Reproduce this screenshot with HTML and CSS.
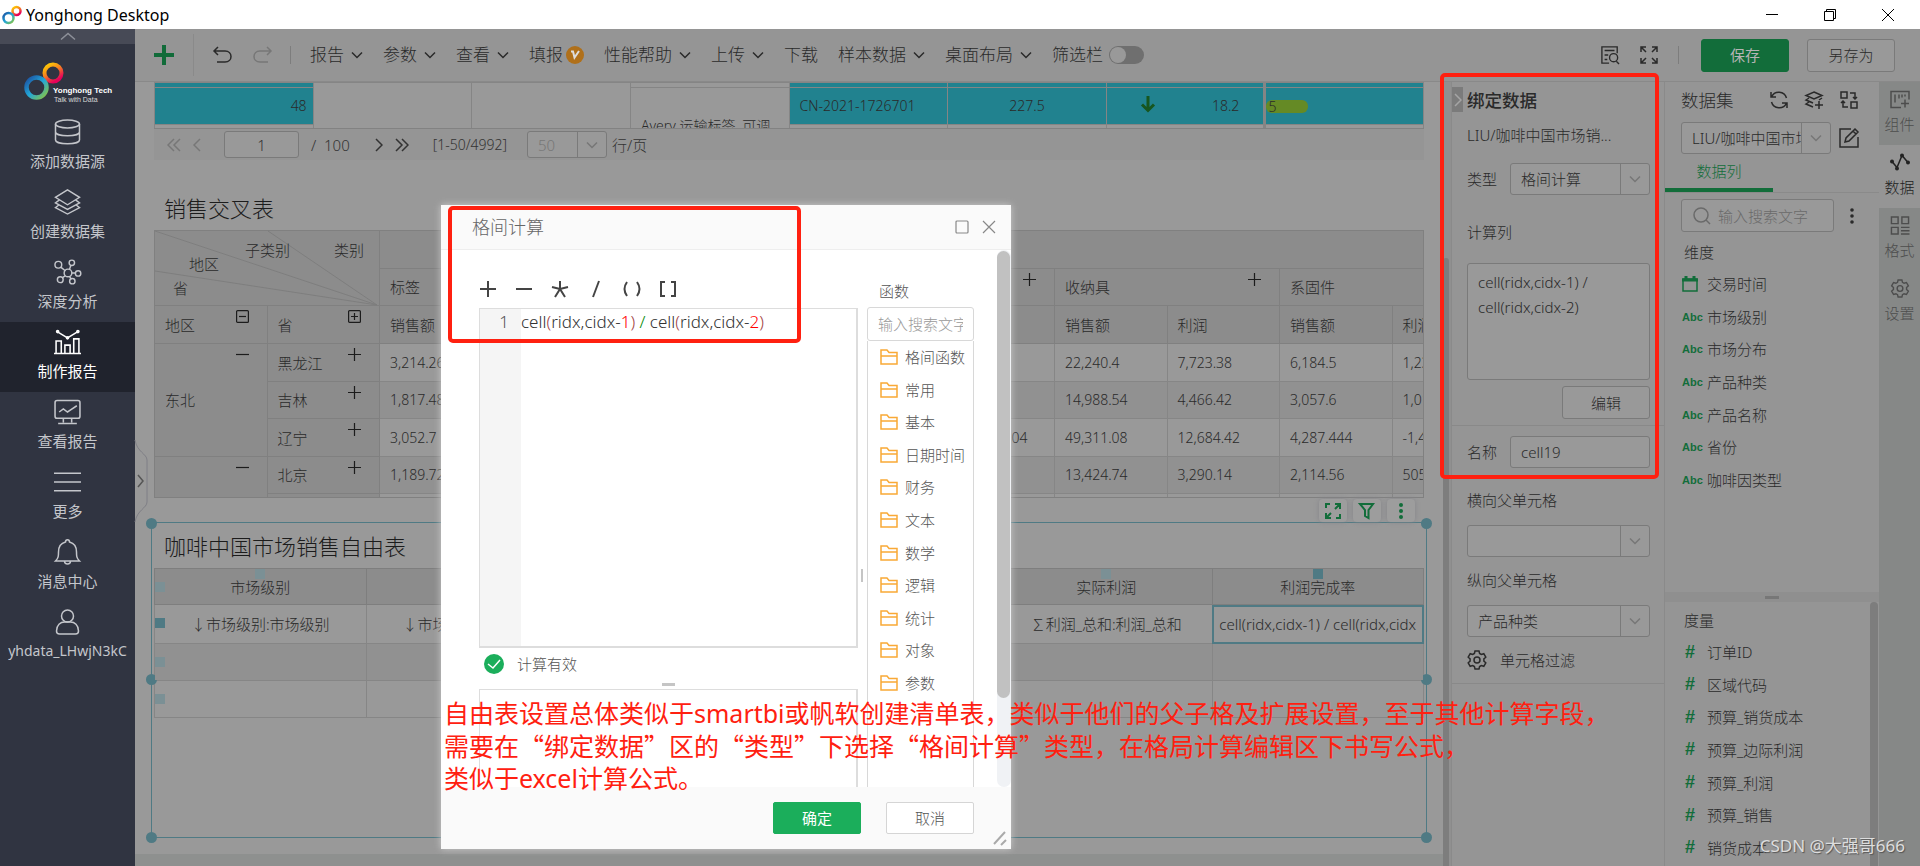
FILE: index.html
```html
<!DOCTYPE html>
<html lang="zh-CN">
<head>
<meta charset="utf-8">
<title>Yonghong Desktop</title>
<link rel="stylesheet" href="styles.css">
</head>
<body>
<svg class="defs" aria-hidden="true">
  <defs>
    <linearGradient id="warm" x1="0" y1="0" x2="0.6" y2="1"><stop offset="0" stop-color="#ffd400"/><stop offset="0.5" stop-color="#f58220"/><stop offset="1" stop-color="#e5005a"/></linearGradient>
    <linearGradient id="cool" x1="0" y1="0" x2="1" y2="1"><stop offset="0" stop-color="#1c4fa0"/><stop offset="0.5" stop-color="#22a7d8"/><stop offset="1" stop-color="#8cc63f"/></linearGradient>
  </defs>
  <symbol id="down" viewBox="0 0 12 12"><path d="M1 3.500l5 5 5-5"/></symbol>
  <symbol id="right" viewBox="0 0 8 14"><path d="M1 1l6 6-6 6"/></symbol>
  <symbol id="left" viewBox="0 0 8 14"><path d="M7 1L1 7l6 6"/></symbol>
  <symbol id="right2" viewBox="0 0 14 14"><path d="M1 1l6 6-6 6M7 1l6 6-6 6"/></symbol>
  <symbol id="left2" viewBox="0 0 14 14"><path d="M7 1L1 7l6 6M13 1L7 7l6 6"/></symbol>
  <symbol id="plus" viewBox="0 0 13 13"><path d="M6.500 0v13M0 6.500h13"/></symbol>
  <symbol id="minus" viewBox="0 0 13 13"><path d="M0 6.500h13"/></symbol>
  <symbol id="boxplus" viewBox="0 0 13 13"><rect x="0.600" y="0.600" width="11.800" height="11.800" rx="1"/><path d="M6.500 3v7M3 6.500h7"/></symbol>
  <symbol id="boxminus" viewBox="0 0 13 13"><rect x="0.600" y="0.600" width="11.800" height="11.800" rx="1"/><path d="M3 6.500h7"/></symbol>
  <symbol id="gear" viewBox="0 0 20 20"><path d="M8 1h4l.6 2.500 1.700 1 2.500-.8 2 3.500-1.900 1.700v2.200l1.900 1.700-2 3.500-2.500-.8-1.700 1L12 19H8l-.6-2.500-1.700-1-2.500.8-2-3.500 1.900-1.700V8.900L1.200 7.200l2-3.500 2.500.8 1.700-1z"/><circle cx="10" cy="10" r="3"/></symbol>
  <symbol id="folder" viewBox="0 0 18 16"><path d="M1 15V1h6l2 2.500h8V15zM1 7h16"/></symbol>
  <symbol id="expand" viewBox="0 0 18 18"><path d="M1 6V1h5M1 1l5 5M12 1h5v5M17 1l-5 5M1 12v5h5M1 17l5-5M17 12v5h-5M17 17l-5-5"/></symbol>
</svg>

<header class="titlebar">
  <svg class="app-icon" viewBox="0 0 20 20"><circle cx="14.500" cy="6" r="4" stroke="url(#warm)"/><circle cx="6.500" cy="13" r="5" stroke="url(#cool)"/></svg>
  <h1>Yonghong Desktop</h1>
  <nav class="window-buttons">
    <button aria-label="最小化"><svg viewBox="0 0 12 12"><path d="M0 5.500h12"/></svg></button>
    <button aria-label="还原"><svg viewBox="0 0 12 12"><path d="M.5 2.500h9v9h-9zM2.500 2.500v-2h9v9h-2"/></svg></button>
    <button aria-label="关闭"><svg viewBox="0 0 12 12"><path d="M0 0l12 12M12 0L0 12"/></svg></button>
  </nav>
</header>

<div class="app">
  <aside class="sidebar">
    <button class="fold" aria-label="收起"><svg viewBox="0 0 14 7"><path d="M0 6.500l7-6 7 6"/></svg></button>
    <div class="brand">
      <svg viewBox="0 0 92 42">
        <circle cx="29" cy="11" r="8.500" fill="none" stroke="url(#warm)" stroke-width="4"/>
        <circle cx="12.500" cy="25.500" r="10" fill="none" stroke="url(#cool)" stroke-width="4.500"/>
        <text class="brand-name" x="29" y="31">Yonghong Tech</text>
        <text class="brand-tag" x="30" y="40">Talk with Data</text>
      </svg>
    </div>
    <nav class="side-nav">
      <a href="#"><svg viewBox="0 0 26 26"><ellipse cx="13" cy="5" rx="12" ry="4"/><path d="M1 5v16c0 5 24 5 24 0V5M1 13c0 5 24 5 24 0"/></svg>添加数据源</a>
      <a href="#"><svg viewBox="0 0 28 28"><path d="M14 1l13 8-13 8L1 9zM5 12l-4 3 13 7 13-7-4-3M5 17l-4 3 13 7 13-7-4-3"/></svg>创建数据集</a>
      <a href="#"><svg viewBox="0 0 28 26"><circle cx="14.500" cy="14" r="4"/><circle cx="4.500" cy="5.500" r="3.500"/><circle cx="18.500" cy="3.500" r="2.800"/><circle cx="25" cy="14.500" r="2.800"/><circle cx="6.500" cy="21" r="3"/><circle cx="19" cy="22.500" r="2.800"/><path d="M7 8l5 4M17.500 6l-1.500 4.500M18.500 14h4M11.500 17L8.500 19M16 17.500l2 3"/></svg>深度分析</a>
      <a href="#" class="active"><svg viewBox="0 0 26 24"><path d="M0 23h26M2 23V11h5v12M10.500 23V15h5v8M19 23V9h5v14M3 2l10 6 10-6"/><circle cx="3.500" cy="2" r="1"/><circle cx="13" cy="8" r="1"/><circle cx="23" cy="2" r="1"/></svg>制作报告</a>
      <a href="#"><svg viewBox="0 0 26 24"><rect x="1" y="1" width="24" height="17" rx="2"/><path d="M5 12l4-3 4 3 3-2 6-4M9 18v4M17 18v4M4 23h18"/></svg>查看报告</a>
      <a href="#"><svg viewBox="0 0 26 20"><path d="M0 1.500h26M0 10h26M0 18.500h26"/></svg>更多</a>
      <a href="#"><svg viewBox="0 0 26 26"><path d="M1 22h24c-3-3-3-5-3-9 0-6-3-9-7-10 0-3-4-3-4 0-4 1-7 4-7 10 0 4 0 6-3 9zM10 22c0 4 6 4 6 0"/></svg>消息中心</a>
      <a href="#" class="user"><svg viewBox="0 0 26 26"><circle cx="13" cy="7" r="6"/><path d="M5 25h16c2 0 3-1 3-3 0-6-4-9-8-9h-6c-4 0-8 3-8 9 0 2 1 3 3 3z"/></svg>yhdata_LHwjN3kC</a>
    </nav>
  </aside>

  <main class="main">
    <div class="toolbar">
      <button class="tool add" aria-label="新建"><svg viewBox="0 0 20 20"><path d="M10 0v20M0 10h20"/></svg></button>
      <button class="tool undo" aria-label="撤销"><svg viewBox="0 0 20 18"><path d="M5 1L1 5l4 4M1 5h11c8 0 8 11 0 11H4"/></svg></button>
      <button class="tool redo" aria-label="重做"><svg viewBox="0 0 20 18"><path d="M15 1l4 4-4 4M19 5H8C0 5 0 16 8 16h8"/></svg></button>
      <nav class="menus">
        <button>报告<svg><use href="#down"/></svg></button>
        <button>参数<svg><use href="#down"/></svg></button>
        <button>查看<svg><use href="#down"/></svg></button>
        <button class="tight">填报<svg class="vip" viewBox="0 0 18 18"><circle cx="9" cy="9" r="9"/><path d="M5 5.500h2l1.500 6L13 5"/></svg></button>
        <button>性能帮助<svg><use href="#down"/></svg></button>
        <button>上传<svg><use href="#down"/></svg></button>
        <button>下载</button>
        <button>样本数据<svg><use href="#down"/></svg></button>
        <button>桌面布局<svg><use href="#down"/></svg></button>
        <label class="switch">筛选栏<input type="checkbox" role="switch"></label>
      </nav>
      <div class="actions">
        <button class="tool" aria-label="预览"><svg viewBox="0 0 20 20"><path d="M18 8V1H1v18h8M4 5h11M4 10h4M4 15h3"/><circle cx="14" cy="13" r="4.500"/><path d="M17 17l3 3"/></svg></button>
        <button class="tool full" aria-label="全屏"><svg><use href="#expand"/></svg></button>
        <button class="btn primary">保存</button>
        <button class="btn">另存为</button>
      </div>
    </div>

    <div class="workspace">
      <section class="canvas">
        <button class="drawer" aria-label="展开"><svg viewBox="0 0 13 84"><path class="edge" d="M0 1c2 12 12 14 12 20v42c0 6-10 8-12 20"/><path d="M3 36l5 6-5 6"/></svg></button>
        <div class="page">
          <div class="widget">
            <div class="clip detail-clip">
              <table class="detail">
                <tr class="thin"><td class="teal"></td><td rowspan="3"></td><td rowspan="3"></td><td></td><td class="teal"></td><td class="teal"></td><td class="teal"></td><td class="teal twin"></td></tr>
                <tr class="full-row"><td class="teal end">48</td><td rowspan="2" class="product">Avery 运输标签, 可调</td><td class="teal order">CN-2021-1726701</td><td class="teal mid">227.5</td><td class="teal"><div class="trend"><svg viewBox="0 0 14 16"><path d="M7 0v14M1 8.500l6 6 6-6"/></svg>18.2</div></td><td class="teal twin"><span class="bar">5</span></td></tr>
                <tr class="thin"><td></td><td></td><td></td><td></td><td class="twin"></td></tr>
              </table>
            </div>
            <div class="pager">
              <button class="off" aria-label="首页"><svg class="w14"><use href="#left2"/></svg></button>
              <button class="off" aria-label="上一页"><svg class="w8"><use href="#left"/></svg></button>
              <input type="text" value="1" aria-label="页码">
              <span class="total">/&nbsp; 100</span>
              <button aria-label="下一页"><svg class="w8"><use href="#right"/></svg></button>
              <button aria-label="末页"><svg class="w14"><use href="#right2"/></svg></button>
              <span class="range">[1-50/4992]</span>
              <span class="combo off"><select aria-label="每页行数"><option>50</option></select><span class="arrow"><svg><use href="#down"/></svg></span></span>
              <span>行/页</span>
            </div>
          </div>

          <div class="widget cross-widget">
            <h2>销售交叉表</h2>
            <div class="clip cross-clip">
              <table class="cross">
                <thead>
                <tr>
                  <th colspan="2" rowspan="2" class="corner"><svg viewBox="0 0 224 74"><path d="M0 0l222 74M113 0l109 74M0 40l222 34"/><text x="90" y="25">子类别</text><text x="179" y="25">类别</text><text x="34" y="39">地区</text><text x="18" y="63">省</text></svg></th>
                  <th colspan="10"></th>
                </tr>
                <tr><th colspan="2">标签</th><th colspan="2"></th><th colspan="2"><svg class="op"><use href="#plus"/></svg></th><th colspan="2">收纳具<svg class="op"><use href="#plus"/></svg></th><th colspan="2">系固件</th></tr>
                <tr><th>地区<svg class="op"><use href="#boxminus"/></svg></th><th>省<svg class="op"><use href="#boxplus"/></svg></th><th>销售额</th><th></th><th></th><th></th><th></th><th></th><th>销售额</th><th>利润</th><th>销售额</th><th>利润</th></tr>
                </thead>
                <tbody>
                <tr><th rowspan="3">东北<svg class="op"><use href="#minus"/></svg></th><th>黑龙江<svg class="op"><use href="#plus"/></svg></th><td>3,214.26</td><td></td><td></td><td></td><td></td><td></td><td>22,240.4</td><td>7,723.38</td><td>6,184.5</td><td>1,231.08</td></tr>
                <tr><th>吉林<svg class="op"><use href="#plus"/></svg></th><td>1,817.48</td><td></td><td></td><td></td><td></td><td></td><td>14,988.54</td><td>4,466.42</td><td>3,057.6</td><td>1,012.06</td></tr>
                <tr><th>辽宁<svg class="op"><use href="#plus"/></svg></th><td>3,052.7</td><td></td><td></td><td></td><td></td><td>-22,685.304</td><td>49,311.08</td><td>12,684.42</td><td>4,287.444</td><td>-1,431.5</td></tr>
                <tr><th rowspan="2"><svg class="op"><use href="#minus"/></svg></th><th>北京<svg class="op"><use href="#plus"/></svg></th><td>1,189.72</td><td></td><td></td><td></td><td></td><td></td><td>13,424.74</td><td>3,290.14</td><td>2,114.56</td><td>505.12</td></tr>
                <tr><th></th><td></td><td></td><td></td><td></td><td></td><td></td><td></td><td></td><td></td><td></td></tr>
                </tbody>
              </table>
            </div>
          </div>

          <div class="widget selected">
            <i class="knob tl"></i><i class="knob tr"></i><i class="knob ml"></i><i class="knob mr"></i><i class="knob bl"></i><i class="knob br"></i>
            <div class="float-tools">
              <button aria-label="放大"><svg viewBox="0 0 16 16"><path d="M1 5V1h4M10 1h5v5M15 1l-5 5M1 10v5h5M1 15l5-5M15 11v4h-4"/></svg></button>
              <button aria-label="过滤"><svg viewBox="0 0 16 16"><path d="M1 1h13L9.500 7v8L6 13V7z"/></svg></button>
              <button aria-label="更多"><svg viewBox="0 0 16 16"><g class="dots"><circle cx="8" cy="2" r="2"/><circle cx="8" cy="8" r="2"/><circle cx="8" cy="14" r="2"/></g></svg></button>
            </div>
            <h2>咖啡中国市场销售自由表</h2>
            <table class="free">
              <tr class="head"><th><i class="tick left"></i><i class="tick top"></i>市场级别</th><th></th><th></th><th></th><th><i class="tick top"></i>实际利润</th><th><i class="tick top on"></i>利润完成率</th></tr>
              <tr class="fields"><td><i class="tick left on"></i>↓市场级别:市场级别</td><td>↓市场分布:市场分布</td><td></td><td></td><td>∑利润_总和:利润_总和</td><td class="current">cell(ridx,cidx-1) / cell(ridx,cidx</td></tr>
              <tr class="alt"><td><i class="tick left"></i></td><td></td><td></td><td></td><td></td><td></td></tr>
              <tr><td><i class="tick left"></i></td><td></td><td></td><td></td><td></td><td></td></tr>
            </table>
          </div>
        </div>
      </section>
      <div class="scroll-strip"><span></span></div>

      <section class="bind">
        <button class="collapse" aria-label="收起面板"><svg class="w8"><use href="#right"/></svg></button>
        <h3>绑定数据</h3>
        <p class="source">LIU/咖啡中国市场销...</p>
        <div class="field type"><label for="type">类型</label><span class="combo"><select id="type"><option>格间计算</option></select><span class="arrow"><svg><use href="#down"/></svg></span></span></div>
        <label class="block" for="calc">计算列</label>
        <textarea id="calc">cell(ridx,cidx-1) /
cell(ridx,cidx-2)</textarea>
        <button class="btn edit">编辑</button>
        <div class="field named"><label for="name">名称</label><input id="name" type="text" value="cell19"></div>
        <label class="block parent" for="hp">横向父单元格</label>
        <span class="combo"><select id="hp"><option></option></select><span class="arrow"><svg><use href="#down"/></svg></span></span>
        <label class="block parent" for="vp">纵向父单元格</label>
        <span class="combo"><select id="vp"><option>产品种类</option></select><span class="arrow"><svg><use href="#down"/></svg></span></span>
        <button class="filter"><svg><use href="#gear"/></svg>单元格过滤</button>
      </section>

      <section class="data">
        <div class="data-top">
          <div class="data-head"><h3>数据集</h3>
            <button aria-label="刷新"><svg viewBox="0 0 18 18"><path d="M1 1v5h5M1.500 6a8 8 0 0 1 15 1M17 17v-5h-5M16.500 12a8 8 0 0 1-15-1"/></svg></button>
            <button aria-label="添加数据集"><svg viewBox="0 0 18 18"><path d="M9 1l8 3.500L9 8 1 4.500zM4 7L1 9l7 3M4 11l-3 2 7 3M17 7l-3 2M14 10v8M10 14h8"/></svg></button>
            <button aria-label="替换"><svg viewBox="0 0 18 18"><path d="M1 1h6v6H1zM11 11h6v6h-6zM10 2h5v6M13 6l2 2 2-2M8 16H3v-6M1 12l2-2 2 2"/></svg></button>
          </div>
          <div class="data-pick"><span class="combo"><select aria-label="数据集"><option>LIU/咖啡中国市场销售</option></select><span class="arrow"><svg><use href="#down"/></svg></span></span>
            <button aria-label="编辑"><svg viewBox="0 0 20 20"><path d="M12 1H1v18h18V9M6 14l1-4L16 1l3 3-9 9zM14 3l3 3"/></svg></button></div>
          <div class="tabs"><button>数据列</button></div>
          <div class="search-row"><label class="search"><svg viewBox="0 0 18 18"><circle cx="8" cy="8" r="7"/><path d="M13 13l4 4"/></svg><input type="text" placeholder="输入搜索文字" aria-label="搜索"></label>
            <button aria-label="更多"><svg viewBox="0 0 4 16"><g class="dots"><circle cx="2" cy="2" r="1.800"/><circle cx="2" cy="8" r="1.800"/><circle cx="2" cy="14" r="1.800"/></g></svg></button></div>
          <h4>维度</h4>
          <ul class="fieldlist dims">
            <li><svg class="cal" viewBox="0 0 16 16"><path d="M1 3h14v12H1z"/><path class="bold" d="M0 4h16M4 0v4M12 0v4"/></svg>交易时间</li>
            <li><b>Abc</b>市场级别</li><li><b>Abc</b>市场分布</li><li><b>Abc</b>产品种类</li><li><b>Abc</b>产品名称</li><li><b>Abc</b>省份</li><li><b>Abc</b>咖啡因类型</li>
          </ul>
        </div>
        <div class="splitter"><span></span></div>
        <div class="data-bottom">
          <div class="measures">
            <h4>度量</h4>
            <ul class="fieldlist">
              <li><b class="hash">#</b>订单ID</li><li><b class="hash">#</b>区域代码</li><li><b class="hash">#</b>预算_销货成本</li><li><b class="hash">#</b>预算_边际利润</li><li><b class="hash">#</b>预算_利润</li><li><b class="hash">#</b>预算_销售</li><li><b class="hash">#</b>销货成本</li>
            </ul>
          </div>
          <span class="thumb"></span>
        </div>
      </section>

      <nav class="rail">
        <button><svg viewBox="0 0 20 18"><path d="M11 17H1V1h18v8M5 4v8M9 4v4M12 4v3M15 4v2M15 9v8M11 13h8"/></svg>组件</button>
        <button class="active"><svg viewBox="0 0 20 18"><path d="M2 8l5 6 5-12 6 7"/><g class="dots"><circle cx="2" cy="8" r="2"/><circle cx="7" cy="15" r="2"/><circle cx="12" cy="2" r="2"/><circle cx="18" cy="9" r="2"/></g></svg>数据</button>
        <button><svg viewBox="0 0 20 20"><path d="M1 1h7v7H1zM12 1h7v7h-7zM1 12h7v7H1zM11 12h9M11 15.500h9M11 19h9"/></svg>格式</button>
        <button><svg><use href="#gear"/></svg>设置</button>
      </nav>
    </div>
  </main>
</div>

<div class="dialog" role="dialog" aria-labelledby="dlg-title">
  <div class="dlg-head"><h2 id="dlg-title">格间计算</h2>
    <button aria-label="最大化"><svg viewBox="0 0 14 14"><rect x="1" y="1" width="12" height="12" rx="1"/></svg></button>
    <button aria-label="关闭"><svg viewBox="0 0 14 14"><path d="M1 1l12 12M13 1L1 13"/></svg></button></div>
  <div class="dlg-body">
    <div class="formula">
      <div class="ops">
        <button aria-label="加"><svg viewBox="0 0 18 18"><path d="M9 1v16M1 9h16"/></svg></button>
        <button aria-label="减"><svg viewBox="0 0 18 18"><path d="M1 9h16"/></svg></button>
        <button aria-label="乘"><svg viewBox="0 0 18 18"><path d="M9 1v8M1 7l8 2 8-2M9 9l-5 8M9 9l5 8"/></svg></button>
        <button aria-label="除"><svg viewBox="0 0 18 18"><path d="M12 1L6 17"/></svg></button>
        <button aria-label="括号"><svg viewBox="0 0 18 18"><path d="M4 2q-5 7 0 14M14 2q5 7 0 14"/></svg></button>
        <button aria-label="方括号"><svg viewBox="0 0 18 18"><path d="M6 2H2v14h4M12 2h4v14h-4"/></svg></button>
      </div>
      <div class="editor"><div class="gutter">1</div><code>cell<i>(</i>ridx,cidx-<em>1</em><i>)</i> <u>/</u> cell<i>(</i>ridx,cidx-<em>2</em><i>)</i></code></div>
      <p class="status"><svg viewBox="0 0 20 20"><circle cx="10" cy="10" r="10"/><path d="M4 10l5 4 7-8"/></svg>计算有效</p>
      <span class="h-grip"></span>
      <div class="result"></div>
    </div>
    <span class="v-grip"></span>
    <div class="functions">
      <label for="fn">函数</label>
      <input id="fn" type="text" placeholder="输入搜索文字">
      <div class="fn-box"><ul>
        <li><svg><use href="#folder"/></svg>格间函数</li><li><svg><use href="#folder"/></svg>常用</li><li><svg><use href="#folder"/></svg>基本</li><li><svg><use href="#folder"/></svg>日期时间</li><li><svg><use href="#folder"/></svg>财务</li><li><svg><use href="#folder"/></svg>文本</li><li><svg><use href="#folder"/></svg>数学</li><li><svg><use href="#folder"/></svg>逻辑</li><li><svg><use href="#folder"/></svg>统计</li><li><svg><use href="#folder"/></svg>对象</li><li><svg><use href="#folder"/></svg>参数</li>
      </ul></div>
    </div>
    <div class="dlg-scroll"><span></span></div>
  </div>
  <div class="dlg-foot"><button class="ok">确定</button><button>取消</button>
    <svg class="resize" viewBox="0 0 16 16"><path d="M2 14L13 2M9 15l5-5"/></svg></div>
</div>

<div class="mark mark-dialog"></div>
<div class="mark mark-panel"></div>
<p class="note">自由表设置总体类似于smartbi或帆软创建清单表，类似于他们的父子格及扩展设置，至于其他计算字段，<br>需要在<span class="quoted">“绑定数据”</span>区的<span class="quoted">“类型”</span>下选择<span class="quoted">“格间计算”</span>类型，在格局计算编辑区下书写公式，<br>类似于excel计算公式。</p>
<p class="credit">CSDN @大强哥666</p>
</body>
</html>
```

FILE: styles.css
```css
* { box-sizing: border-box; }
body {
  margin: 0;
  height: 100vh;
  overflow: hidden;
  display: flex;
  flex-direction: column;
  font: 15px/20px "Noto Sans", "Noto Sans CJK SC", sans-serif;
  font-weight: 300;
  color: #2a2a2a;
  background: #959595;
}
h1, h2, h3, h4, p, ul { margin: 0; padding: 0; font-weight: inherit; }
ul { list-style: none; }
button, input, select, textarea { font: inherit; color: inherit; }
button { background: none; border: 0; padding: 0; }
input, textarea, select { border: 1px solid #7a7a7a; border-radius: 3px; background: #999; outline: 0; min-width: 0; }
a { color: inherit; text-decoration: none; }
svg { fill: none; stroke: currentColor; stroke-width: 1.500; flex: none; overflow: visible; display: block; }
svg text { fill: #2a2a2a; stroke: none; font-size: 15px; }
.dots { fill: currentColor; stroke: none; }
.defs { position: absolute; width: 0; height: 0; }
.w8 { width: 8px; height: 14px; }
.w14 { width: 14px; height: 14px; }

/* title bar */
.titlebar { height: 29px; background: #fff; color: #000; display: flex; align-items: center; flex: none; }
.titlebar h1 { font-size: 16px; font-weight: 400; flex: 1; margin-left: 4px; }
.app-icon { width: 20px; height: 20px; margin-left: 2px; stroke-width: 2.500; }
.window-buttons { display: flex; gap: 46px; padding-right: 26px; }
.window-buttons svg { width: 12px; height: 12px; stroke-width: 1; }

.app { flex: 1; display: flex; min-height: 0; }

/* sidebar */
.sidebar { width: 135px; background: #303441; color: #c4c6cb; flex: none; }
.fold { width: 100%; height: 15px; background: #474a56; display: flex; justify-content: center; align-items: center; }
.fold svg { width: 14px; height: 7px; color: #8d9099; }
.brand { height: 68px; padding: 18px 0 0 24px; }
.brand svg { width: 92px; height: 42px; }
svg .brand-name { fill: #fff; font: bold 8px "Liberation Sans", sans-serif; }
svg .brand-tag { fill: #d8d8d8; font: 7px "Liberation Sans", sans-serif; }
.side-nav a { height: 70px; display: grid; grid-template-rows: 40px 18px; justify-items: center; align-items: center; font-weight: 400; }
.side-nav .user { font-size: 14px; }
.side-nav svg { width: 27px; height: 26px; }
.side-nav .active { background: #20232d; color: #fff; }

/* toolbar */
.main { flex: 1; min-width: 0; display: flex; flex-direction: column; }
.toolbar { height: 53px; flex: none; display: flex; align-items: center; border-bottom: 1px solid #898989; font-size: 17px; }
.tool svg { width: 20px; height: 18px; }
.add { width: 59px; height: 42px; padding-left: 19px; border-right: 1px solid #8a8a8a; color: #116b39; }
.add svg { width: 20px; height: 20px; stroke-width: 4; }
.undo { margin-left: 19px; }
.redo { margin-left: 19px; padding-right: 18px; border-right: 1px solid #7d7d7d; color: #777; }
.menus { display: flex; gap: 20px; padding-left: 19px; }
.menus button, .switch { display: flex; align-items: center; gap: 7px; white-space: nowrap; }
.menus button svg { width: 12px; height: 12px; }
.menus .tight { gap: 3px; }
.menus .tight .vip { width: 18px; height: 18px; fill: #b0701a; stroke: none; }
.menus .vip path { stroke: #ddd; stroke-width: 2; fill: none; }
.switch { gap: 6px; }
.switch input { appearance: none; margin: 0; width: 35px; height: 18px; border: 0; border-radius: 9px; background: #6f6f6f; padding: 1px; }
.switch input::before { content: ""; display: block; width: 16px; height: 16px; border-radius: 8px; background: #999; }
.actions { margin-left: auto; padding-right: 25px; display: flex; align-items: center; font-size: 15px; }
.actions .full { margin-left: 20px; padding-right: 20px; margin-right: 22px; border-right: 1px solid #7d7d7d; }
.full svg { width: 18px; height: 18px; }
.btn { width: 88px; height: 33px; border: 1px solid #7a7a7a; border-radius: 3px; background: #999; }
.btn.primary { background: #126d3a; border-color: #126d3a; color: #b5b5b5; font-weight: 400; margin-right: 18px; }

/* workspace */
.workspace { flex: 1; display: flex; min-height: 0; }
.canvas { flex: 1; min-width: 0; background: #8e908f; padding-bottom: 12px; position: relative; display: flex; }
.page { flex: 1; min-width: 0; background: #999; padding: 0 16px 16px; display: flex; flex-direction: column; }
.drawer { position: absolute; left: 0; top: 357px; color: #555; }
.drawer svg { width: 13px; height: 84px; }
.edge { stroke: #7f7f86; stroke-width: 1; fill: #999; }
.widget { margin: 0 3px; }
.widget h2 { font-size: 22px; line-height: 32px; color: #1c1c1c; padding-left: 10px; }
.clip { overflow: hidden; }
table { border-collapse: collapse; table-layout: fixed; width: 100%; }
th { font-weight: inherit; }
.detail-clip { height: 47px; border-bottom: 1px solid #828282; }
.detail td { border: 1px solid #858585; padding: 0 10px; white-space: nowrap; overflow: hidden; font-size: 14px; }
.detail tr.thin { height: 5px; line-height: 0; }
.detail tr.full-row { height: 37px; }
.detail .teal { background: #21828f; }
.detail .end { text-align: right; padding-right: 6px; }
.detail .mid { text-align: center; }
.detail .product { vertical-align: bottom; line-height: 6px; overflow: visible; }
.detail .twin { padding: 0; border-left-width: 3px; }
.trend { display: flex; justify-content: space-between; padding: 0 14px 0 24px; }
.trend svg { width: 14px; height: 16px; color: #17561f; stroke-width: 3; }
.bar { display: block; width: 42px; height: 13px; line-height: 13px; border-radius: 6px; background: #658a25; padding-left: 2px; }
.pager { height: 31px; background: #959595; display: flex; align-items: center; color: #333; }
.pager button:nth-of-type(1) { margin-left: 13px; }
.pager button:nth-of-type(2) { margin-left: 12px; }
.pager button:nth-of-type(4) { margin-left: 12px; }
.pager .off { color: #777; }
.pager input { width: 75px; height: 27px; text-align: center; margin-left: 23px; }
.pager .total { margin: 0 25px 0 12px; }
.pager .range { margin: 0 20px 0 24px; font-size: 14px; }
.pager .combo { width: 80px; height: 27px; margin-right: 5px; }

.combo { display: flex; height: 32px; border: 1px solid #7a7a7a; border-radius: 3px; background: #999; overflow: hidden; }
.combo select { appearance: none; border: 0; flex: 1; width: 0; padding: 0 10px; border-radius: 0; background: none; }
.arrow { width: 29px; border-left: 1px solid #7a7a7a; display: flex; align-items: center; justify-content: center; flex: none; color: #777; }
.arrow svg { width: 12px; height: 12px; }

.cross-widget { padding-top: 28px; }
.cross-widget h2 { line-height: 40px; padding-bottom: 2px; }
.cross-clip { height: 268px; border-right: 1px solid #808080; border-bottom: 1px solid #808080; }
.cross { width: 1351px; }
.cross tr:nth-child(odd) { height: 38px; }
.cross tr:nth-child(even) { height: 37px; }
.cross th, .cross td { border: 1px solid #808080; padding: 0 10px; text-align: left; position: relative; white-space: nowrap; }
.cross td { font-size: 14px; border-color: #868686; }
.cross th { background: #8c8c8c; }
.cross tbody tr:nth-child(even) td { background: #919191; }
.cross .corner { padding: 0; }
.corner svg { width: 224px; height: 74px; stroke: #7e7e7e; stroke-width: 1; }
.op { position: absolute; top: 4px; right: 18px; width: 13px; height: 13px; color: #1c1c1c; stroke-width: 1.200; }

.selected { margin: 24px 0 0; flex: 1; border: 1px solid #4f7a84; padding: 7px 2px; position: relative; }
.selected h2 { padding-bottom: 6px; }
.knob { position: absolute; width: 11px; height: 11px; border-radius: 50%; background: #4f7a84; }
.tl, .tr { top: -5px; }
.ml, .mr { top: 151px; }
.bl, .br { bottom: -6px; }
.tl, .ml, .bl { left: -6px; }
.tr, .mr, .br { right: -6px; }
.float-tools { position: absolute; right: 11px; top: -24px; display: flex; gap: 6px; color: #126d3a; }
.float-tools button { width: 28px; height: 23px; border-radius: 4px; background: #9d9d9d; box-shadow: 0 0 5px #85858a; display: flex; align-items: center; justify-content: center; }
.float-tools svg { width: 16px; height: 16px; stroke-width: 2; }
.free th, .free td { border: 1px solid #868686; text-align: center; padding: 0; position: relative; white-space: nowrap; overflow: hidden; }
.free tr { height: 37px; }
.free .head { height: 36px; }
.free .fields { height: 39px; }
.free .head th { background: #8c8c8c; border-color: #7e7e7e; }
.free .alt td { background: #919191; }
.free .current { outline: 2px solid #4f7a84; outline-offset: -2px; }
.tick { position: absolute; width: 10px; height: 10px; background: #7b9095; }
.tick.on { background: #4f7a84; }
.tick.left { left: 0; top: 13px; }
.tick.top { top: 0; left: 100px; }

.scroll-strip { width: 9px; background: #909090; flex: none; padding: 176px 2px 0 0; border-right: 1px solid #8a8a8a; display: flex; }
.scroll-strip span { flex: 1; background: #7d7d7d; border-radius: 4px 4px 0 0; }

/* binding panel */
.bind { width: 213px; flex: none; border-right: 1px solid #8a8a8a; padding: 8px 14px 0 15px; position: relative; display: flex; flex-direction: column; }
.bind h3 { font-weight: 500; }
.collapse { position: absolute; left: 0; top: 5px; width: 11px; height: 25px; background: #7b7b7b; color: #a5a5a5; display: flex; align-items: center; justify-content: center; }
.source { margin-top: 15px; white-space: nowrap; }
.field { display: flex; align-items: center; justify-content: space-between; }
.field .combo, .field input { width: 140px; }
.type { margin-top: 18px; }
.block { margin: 27px 0 21px; }
.bind textarea { height: 117px; padding: 6px 10px; line-height: 25px; resize: none; display: block; }
.edit { margin-top: 6px; align-self: flex-end; }
.named { margin: 6px -14px 0 -15px; padding: 10px 14px 0 15px; border-top: 1px solid #898989; }
.named input { height: 32px; padding: 0 10px; }
.block.parent { margin: 22px 0 15px; }
.bind > .combo + .block.parent { margin: 13px 0 15px; }
.filter { margin: 0 -14px 0 -15px; padding: 13px 15px; border-bottom: 1px solid #898989; display: flex; gap: 13px; text-align: left; }
.filter svg { width: 20px; height: 20px; }

/* data panel */
.data { width: 214px; flex: none; display: flex; flex-direction: column; min-height: 0; }
.data-top { height: 510px; flex: none; }
.data-head { display: flex; align-items: center; gap: 17px; padding: 8px 21px 0 16px; }
.data-head h3 { flex: 1; }
.data-head svg { width: 18px; height: 18px; }
.data-pick { display: flex; align-items: center; gap: 8px; padding: 12px 20px 0 16px; }
.data-pick .combo { flex: 1; min-width: 0; }
.data-pick select { padding-right: 0; }
.data-pick button svg { width: 20px; height: 20px; }
.tabs { border-bottom: 1px solid #8a8a8a; height: 39px; display: flex; }
.tabs button { width: 108px; border-bottom: 4px solid #126d3a; color: #126d3a; }
.search-row { display: flex; align-items: center; gap: 16px; padding: 6px 25px 0 16px; }
.search { flex: 1; height: 33px; min-width: 0; border: 1px solid #7a7a7a; border-radius: 3px; background: #999; display: flex; align-items: center; gap: 7px; padding-left: 11px; color: #6a6a6a; }
.search svg { width: 18px; height: 18px; }
.search input { border: 0; padding: 0; width: 100%; background: none; }
::placeholder { color: #6a6a6a; opacity: 1; }
.search-row button svg { width: 4px; height: 16px; }
.data h4 { padding: 10px 19px 6px; }
.fieldlist { display: grid; grid-auto-rows: 1fr; height: 228px; }
.fieldlist li { display: grid; grid-template-columns: 25px 1fr; align-items: center; padding-left: 17px; white-space: nowrap; }
.fieldlist b { color: #126d3a; font: bold 11px "Liberation Sans", sans-serif; }
.fieldlist .hash { font-size: 18px; padding-left: 3px; }
.cal { width: 16px; height: 16px; color: #126d3a; }
.cal .bold { stroke-width: 3; }
.splitter { height: 10px; background: #8f8f8f; display: flex; align-items: center; justify-content: center; flex: none; }
.splitter span { width: 14px; height: 3px; background: #777; }
.data-bottom { flex: 1; min-height: 0; display: flex; overflow: hidden; }
.measures { flex: 1; }
.data .measures h4 { padding: 8px 19px 6px; }
.thumb { width: 8px; background: #7d7d7d; border-radius: 4px 4px 0 0; margin-right: 1px; }

/* right rail */
.rail { width: 41px; background: #868887; color: #4d4d4d; flex: none; }
.rail button { width: 100%; height: 63px; display: grid; grid-template-rows: 20px 20px; gap: 5px; justify-items: center; align-content: center; align-items: center; padding-bottom: 4px; }
.rail .active { background: #959595; color: #222; }
.rail svg { width: 20px; height: 19px; }

/* dialog */
.dialog { position: absolute; left: 441px; top: 205px; width: 570px; height: 644px; background: #fff; box-shadow: 0 0 7px #ccc; color: #555; display: flex; flex-direction: column; }
.dlg-head { height: 45px; background: #fafafa; border-bottom: 1px solid #eee; display: flex; align-items: center; gap: 13px; padding: 0 15px 0 31px; color: #888; }
.dlg-head h2 { flex: 1; font-size: 18px; color: #666; }
.dlg-head svg { width: 14px; height: 14px; stroke-width: 1.200; }
.dlg-body { flex: 1; display: flex; min-height: 0; overflow: hidden; }
.formula { width: 379px; margin-left: 38px; padding-top: 20px; display: flex; flex-direction: column; }
.ops { height: 38px; display: flex; align-items: center; gap: 18px; color: #444; }
.ops svg { width: 18px; height: 18px; stroke-width: 2; }
.editor { height: 340px; border: 1px solid #ddd; border-width: 1px 2px 2px 1px; display: flex; line-height: 25px; font-size: 17px; }
.gutter { width: 41px; background: #f5f5f5; text-align: right; padding-right: 12px; }
.editor code { font: inherit; white-space: nowrap; color: #333; }
.editor i { font-style: normal; color: #a34444; }
.editor em { font-style: normal; color: #f00; }
.editor u { text-decoration: none; color: #080; }
.status { height: 32px; display: flex; align-items: center; gap: 13px; padding-left: 5px; }
.status svg { width: 20px; height: 20px; fill: #1bae5b; stroke: none; }
.status path { stroke: #fff; stroke-width: 1.500; fill: none; }
.h-grip { width: 13px; height: 3px; background: #c5c5c5; margin: 3px auto; }
.result { flex: 1; border: 1px solid #ddd; border-width: 1px 2px 0 1px; }
.v-grip { width: 2px; height: 13px; background: #c5c5c5; margin: 319px 4px 0 3px; }
.functions { width: 107px; padding-top: 26px; display: flex; flex-direction: column; }
.functions label { padding: 5px 12px 6px; }
.functions input { height: 34px; border: 1px solid #d8d8d8; padding: 0 10px; background: #fff; }
.functions ::placeholder { color: #999; }
.fn-box { flex: 1; border: 1px solid #d8d8d8; border-width: 0 1px; }
.fn-box ul { height: 358px; display: grid; grid-auto-rows: 1fr; }
.fn-box li { display: flex; align-items: center; gap: 7px; padding-left: 12px; white-space: nowrap; }
.fn-box svg { width: 18px; height: 16px; color: #f9a936; }
.dlg-scroll { width: 14px; margin-left: auto; background: #f0f2f5; border-radius: 7px; }
.dlg-scroll span { display: block; height: 447px; margin: 1px 1px 0 0; border-radius: 7px; background: #c1c1c1; }
.dlg-foot { height: 62px; background: #fafafa; display: flex; align-items: center; justify-content: flex-end; gap: 25px; padding-right: 37px; position: relative; }
.dlg-foot button { width: 88px; height: 32px; border: 1px solid #d5d5d5; border-radius: 2px; background: #fff; }
.dlg-foot .ok { background: #1bae5b; border-color: #1bae5b; color: #fff; font-weight: 400; }
.resize { position: absolute; right: 3px; bottom: 3px; width: 16px; height: 16px; stroke-width: 2; color: #aaa; }

/* annotations over the window */
.mark { position: absolute; border: 4px solid #ff2010; border-radius: 5px; }
.mark-dialog { left: 448px; top: 206px; width: 353px; height: 137px; }
.mark-panel { left: 1440px; top: 73px; width: 219px; height: 406px; }
.note { position: absolute; left: 444px; top: 697px; font-size: 25px; font-weight: 400; line-height: 32px; color: #ff2010; white-space: nowrap; }
.quoted { font-family: "Noto Sans CJK SC", sans-serif; }
.credit { position: absolute; right: 15px; bottom: 10px; font-size: 17px; font-weight: 400; color: #ddd; text-shadow: 1px 1px 1px #555; }
```
